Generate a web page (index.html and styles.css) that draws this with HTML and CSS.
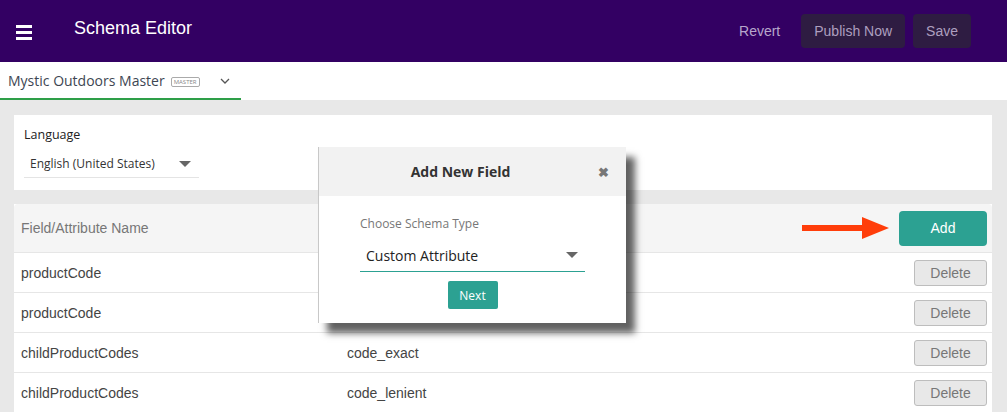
FILE: index.html
```
<!DOCTYPE html>
<html>
<head>
<meta charset="utf-8">
<link rel="stylesheet" href="styles.css">
</head>
<body>
<header class="topbar">
  <div class="hamburger"><span></span><span></span><span></span></div>
  <div class="title">Schema Editor</div>
  <div class="actions">
    <span class="revert">Revert</span>
    <span class="dark-btn publish">Publish Now</span>
    <span class="dark-btn save">Save</span>
  </div>
</header>
<nav class="tabbar">
  <div class="tab">
    <span class="tab-name">Mystic Outdoors Master</span>
    <span class="badge">MASTER</span>
    <svg class="chev" width="10" height="6" viewBox="0 0 10 6"><path d="M1 1 L5 5 L9 1" fill="none" stroke="#555" stroke-width="1.3"/></svg>
  </div>
</nav>
<main class="main">
  <section class="card">
    <div class="lang-label">Language</div>
    <div class="lang-select">
      <span>English (United States)</span>
      <span class="caret"></span>
    </div>
  </section>
  <section class="table">
    <div class="thead">
      <span class="th">Field/Attribute Name</span>
      <svg class="arrow" width="88" height="24" viewBox="0 0 88 24"><path d="M0 9 H60 V1 L87 12 L60 23 V15 H0 Z" fill="#ff3d0a"/></svg>
      <span class="add-btn">Add</span>
    </div>
    <div class="row"><span class="c1">productCode</span><span class="c2"></span><span class="del">Delete</span></div>
    <div class="row"><span class="c1">productCode</span><span class="c2"></span><span class="del">Delete</span></div>
    <div class="row"><span class="c1">childProductCodes</span><span class="c2">code_exact</span><span class="del">Delete</span></div>
    <div class="row"><span class="c1">childProductCodes</span><span class="c2">code_lenient</span><span class="del">Delete</span></div>
  </section>
</main>
<div class="modal">
  <div class="modal-head">
    <span class="modal-title">Add New Field</span>
    <span class="close">&#10006;</span>
  </div>
  <div class="modal-body">
    <div class="m-label">Choose Schema Type</div>
    <div class="m-select">
      <span>Custom Attribute</span>
      <span class="caret"></span>
    </div>
    <div class="next-wrap"><span class="next-btn">Next</span></div>
  </div>
</div>
</body>
</html>
```
FILE: styles.css
```
* { box-sizing: border-box; }
html, body { margin: 0; padding: 0; }
body {
  width: 1007px;
  height: 412px;
  overflow: hidden;
  font-family: "Liberation Sans", Arial, sans-serif;
  background: #e8e8e8;
  position: relative;
}
.topbar {
  height: 62px;
  background: #330063;
  display: flex;
  align-items: center;
  padding-left: 16px;
}
.hamburger {
  width: 16px;
  display: flex;
  flex-direction: column;
  gap: 3px;
  margin-top: 2px;
}
.hamburger span { display: block; height: 3px; background: #fff; }
.title {
  color: #fff;
  font-size: 18px;
  margin-left: 42px;
  margin-top: -5px;
}
.actions {
  margin-left: auto;
  display: flex;
  align-items: center;
  padding-right: 36px;
  font-size: 14px;
}
.revert { color: #b7a6cc; margin-right: 21px; }
.dark-btn {
  background: #2e1c42;
  color: #ad9fbf;
  height: 34px;
  display: flex;
  align-items: center;
  border-radius: 4px;
  padding: 0 13px;
}
.publish { margin-right: 8px; }
.save { padding: 0 13px; }

.tabbar {
  height: 38px;
  background: #fff;
  display: flex;
}
.tab {
  width: 241px;
  border-bottom: 2px solid #2e9f48;
  display: flex;
  align-items: center;
  padding-left: 8px;
  font-family: "Open Sans", sans-serif;
}
.tab-name { font-size: 14px; color: #3d4652; }
.badge {
  font-size: 6px;
  color: #888;
  border: 1px solid #aaa;
  border-radius: 2px;
  padding: 0 2px;
  margin-left: 6px;
  line-height: 8px;
  margin-top: 3px;
}
.chev { margin-left: 20px; margin-top: 1px; }

.main { padding: 15px 15px 0 14px; }
.card {
  background: #fff;
  height: 75px;
  padding: 11px 0 0 10px;
  font-family: "Open Sans", sans-serif;
}
.lang-label { font-size: 12.5px; color: #222; }
.lang-select {
  width: 175px;
  height: 35px;
  border-bottom: 1px solid #e4e4e4;
  display: flex;
  align-items: center;
  justify-content: space-between;
  padding: 7px 8px 0 6px;
  font-size: 12px;
  color: #333;
  margin-top: 0;
}
.caret {
  width: 0; height: 0;
  border-left: 6px solid transparent;
  border-right: 6px solid transparent;
  border-top: 6px solid #666;
}
.table { margin-top: 14px; background: #fff; }
.thead {
  height: 49px;
  background: #f5f5f5;
  border-radius: 4px 4px 0 0;
  border-bottom: 1px solid #e6e6e6;
  display: flex;
  align-items: center;
  padding: 0 5px 0 7px;
}
.th { color: #777; font-size: 14px; }
.arrow { margin-left: auto; margin-right: 9px; }
.add-btn {
  width: 88px;
  height: 35px;
  background: #2ca192;
  color: #fff;
  border-radius: 4px;
  display: flex;
  align-items: center;
  justify-content: center;
  font-size: 14px;
}
.row {
  height: 40px;
  border-bottom: 1px solid #e6e6e6;
  display: flex;
  align-items: center;
  padding: 1px 5px 0 7px;
  font-size: 14px;
  color: #444;
}
.c1 { width: 326px; }
.c2 { flex: 1; }
.del {
  width: 73px;
  height: 26px;
  border: 1px solid #bdbdbd;
  background: #e8e8e8;
  border-radius: 3px;
  color: #777;
  display: flex;
  align-items: center;
  justify-content: center;
}

.modal {
  position: absolute;
  left: 318px;
  top: 147px;
  width: 308px;
  height: 176px;
  background: #fff;
  border-left: 1px solid #c8c8c8;
  box-shadow: 9px 10px 7px rgba(0,0,0,0.62);
  font-family: "Open Sans", sans-serif;
}
.modal-head {
  height: 49px;
  background: #f2f2f2;
  display: flex;
  align-items: center;
  justify-content: center;
  padding-right: 24px;
  position: relative;
}
.modal-title { font-weight: bold; font-size: 14px; color: #333; }
.close {
  position: absolute;
  right: 17px;
  top: 16px;
  font-size: 13px;
  color: #777;
  font-weight: bold;
}
.modal-body { padding: 19px 41px 0 41px; }
.m-label { font-size: 12px; color: #777; }
.m-select {
  height: 37px;
  border-bottom: 1px solid #2ca192;
  display: flex;
  align-items: center;
  justify-content: space-between;
  padding: 4px 7px 0 6px;
  font-size: 14px;
  color: #222;
  margin-top: 3px;
}
.next-wrap { display: flex; justify-content: center; margin-top: 9px; }
.next-btn {
  width: 50px;
  height: 28px;
  background: #2ca192;
  color: #fff;
  border-radius: 2px;
  display: flex;
  align-items: center;
  justify-content: center;
  font-size: 12px;
}
```
